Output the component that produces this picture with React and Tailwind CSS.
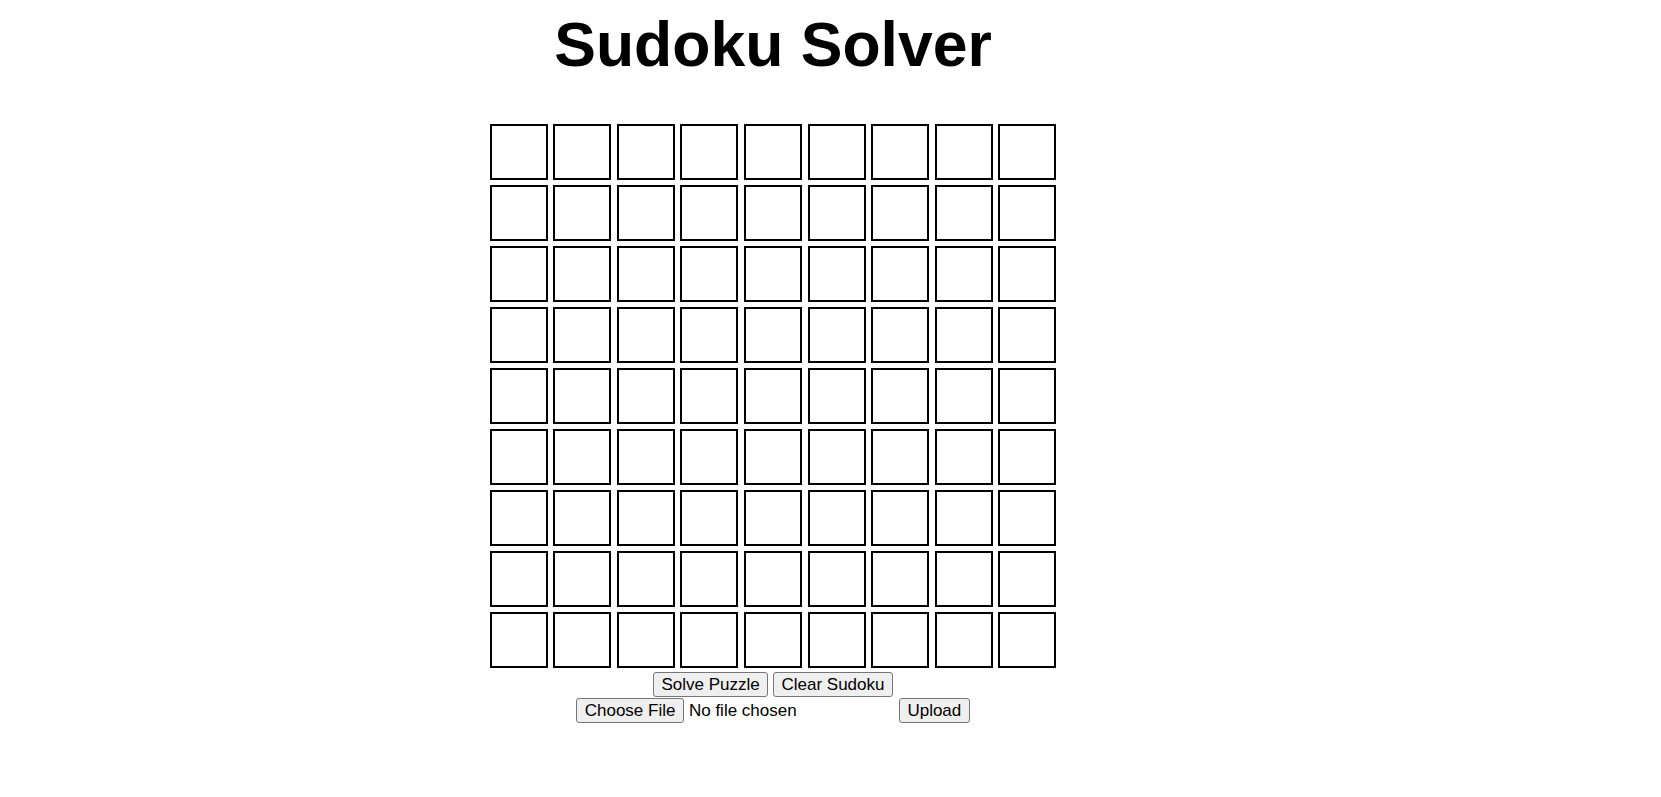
import { useState } from "react";

const SudokuSolver = () => {
  const [board, setBoard] = useState(
    Array.from({ length: 9 }, () => Array(9).fill(""))
  );
  const [fileName, setFileName] = useState("");

  const handleChange = (r, c, value) => {
    if (value !== "" && !/^[1-9]$/.test(value)) return;
    const next = board.map((row) => [...row]);
    next[r][c] = value;
    setBoard(next);
  };

  const clearBoard = () => {
    setBoard(Array.from({ length: 9 }, () => Array(9).fill("")));
  };

  const btn =
    "inline-flex items-center h-[25px] px-[7.5px] border border-[#767676] rounded-[3px] bg-[#efefef] text-[17px] leading-none text-black hover:bg-[#e5e5e5]";

  return (
    <div
      className="w-[1546px] min-h-screen flex flex-col items-center bg-white text-black"
      style={{ fontFamily: '"Liberation Sans", Arial, sans-serif' }}
    >
      <h1 className="mt-[8px] text-[62.5px] leading-[72px] font-bold">
        Sudoku Solver
      </h1>

      {/* board */}
      <div className="mt-[44px] grid grid-cols-[repeat(9,58px)] gap-x-[5.6px] gap-y-[5px]">
        {board.map((row, r) =>
          row.map((val, c) => (
            <input
              key={r + "-" + c}
              type="text"
              maxLength={1}
              value={val}
              onChange={(e) => handleChange(r, c, e.target.value)}
              className="w-[58px] h-[56px] border-2 border-black bg-white text-center text-[24px] outline-none"
            />
          ))
        )}
      </div>

      <div className="mt-[4px] flex items-center gap-[4.7px]">
        <button className={btn}>Solve Puzzle</button>
        <button className={btn} onClick={clearBoard}>
          Clear Sudoku
        </button>
      </div>

      <div className="mt-[1px] flex items-center gap-[4.7px]">
        <label className="w-[318px] flex items-center cursor-pointer">
          <span className={btn}>Choose File</span>
          <span className="ml-[5px] text-[17px]">
            {fileName || "No file chosen"}
          </span>
          <input
            type="file"
            className="hidden"
            onChange={(e) => setFileName(e.target.files[0]?.name || "")}
          />
        </label>
        <button className={btn}>Upload</button>
      </div>
    </div>
  );
};

export default SudokuSolver;
